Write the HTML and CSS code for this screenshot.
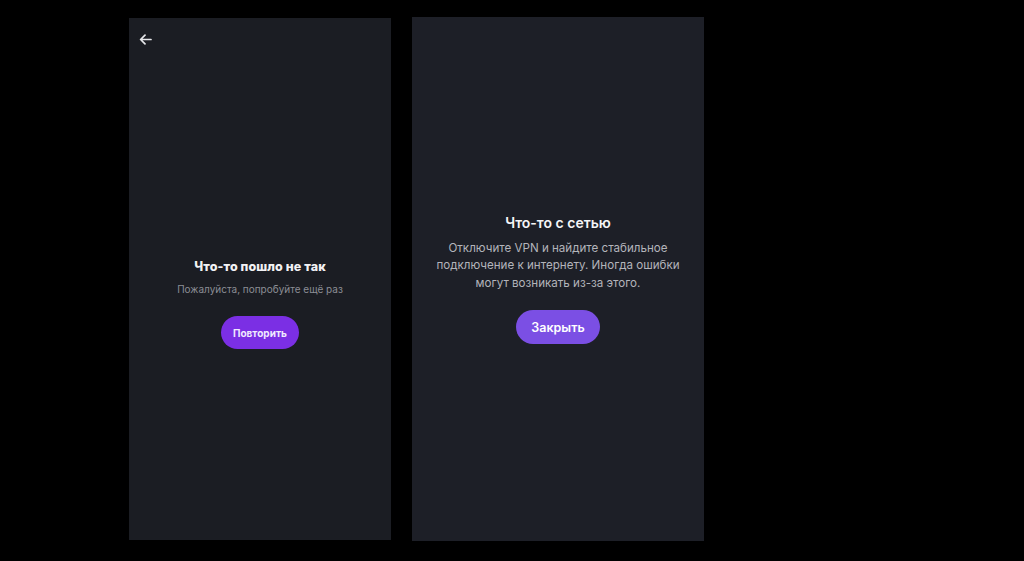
FILE: index.html
```html
<!DOCTYPE html>
<html lang="ru">
<head>
<meta charset="utf-8">
<link rel="stylesheet" href="styles.css">
</head>
<body>
<div class="stage">
  <section class="panel panel-left">
    <div class="back">
      <svg width="13" height="11" viewBox="0 0 13 11" fill="none">
        <path d="M12 5.5H1.8M6 1.2L1.6 5.5L6 9.8" stroke="#e6e7ea" stroke-width="1.7" stroke-linecap="round" stroke-linejoin="round"/>
      </svg>
    </div>
    <div class="left-content">
      <h1 class="left-title">Что-то пошло не так</h1>
      <p class="left-sub">Пожалуйста, попробуйте ещё раз</p>
      <button class="btn btn-left">Повторить</button>
    </div>
  </section>
  <section class="panel panel-right">
    <h2 class="right-title">Что-то с сетью</h2>
    <p class="right-body">Отключите VPN и найдите стабильное<br>подключение к интернету. Иногда ошибки<br>могут возникать из-за этого.</p>
    <button class="btn btn-right">Закрыть</button>
  </section>
</div>
</body>
</html>
```
FILE: styles.css
```css
html, body {
  margin: 0;
  padding: 0;
  background: #000;
  font-family: Inter, "Noto Sans", sans-serif;
}
.stage {
  display: flex;
  align-items: flex-start;
  gap: 21px;
  padding: 17px 0 0 129px;
  height: 561px;
  box-sizing: border-box;
}
.panel {
  display: flex;
  flex-direction: column;
  align-items: center;
  box-sizing: border-box;
}
.panel-left {
  width: 262px;
  height: 522px;
  margin-top: 1px;
  background: #1b1d23;
}
.back {
  align-self: flex-start;
  margin: 16px 0 0 10px;
  height: 11px;
  line-height: 0;
}
.left-content {
  display: flex;
  flex-direction: column;
  align-items: center;
  margin-top: 214px;
}
.left-title {
  margin: 0;
  font-size: 12.5px;
  line-height: 16px;
  font-weight: 800;
  color: #f2f2f4;
  letter-spacing: 0.1px;
}
.left-sub {
  margin: 7px 0 0;
  font-size: 10px;
  line-height: 14px;
  color: #8b8d95;
}
.btn {
  border: none;
  border-radius: 999px;
  color: #fff;
  font-family: Inter, "Noto Sans", sans-serif;
  padding: 0;
  display: flex;
  align-items: center;
  justify-content: center;
}
.btn-left {
  margin-top: 20px;
  width: 78px;
  height: 33px;
  background: #7b2fe4;
  font-size: 10px;
  font-weight: 700;
  color: #f0eaff;
}
.panel-right {
  width: 292px;
  height: 524px;
  background: #1d1f27;
  justify-content: center;
}
.right-title {
  margin: 0;
  font-size: 14px;
  line-height: 18px;
  font-weight: 600;
  color: #f5f5f7;
}
.right-body {
  margin: 8px 0 0;
  font-size: 11.6px;
  line-height: 17.5px;
  color: #b3b4bb;
  text-align: center;
}
.btn-right {
  margin-top: 18px;
  width: 84px;
  height: 34px;
  background: #7b4fe4;
  font-size: 12.5px;
  font-weight: 600;
}
```
